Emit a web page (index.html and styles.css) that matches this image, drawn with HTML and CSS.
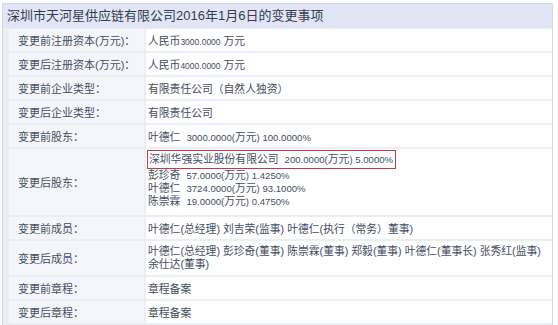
FILE: index.html
```html
<!DOCTYPE html>
<html lang="zh-CN">
<head>
<meta charset="utf-8">
<title>变更事项</title>
<link rel="stylesheet" href="styles.css">
</head>
<body>
<div class="box">
  <div class="title">深圳市天河星供应链有限公司2016年1月6日的变更事项</div>
  <div class="grid">
    <div class="lab">变更前注册资本(万元)：</div>
    <div class="val"><span>人民币<span class="sm">3000.0000</span> 万元</span></div>

    <div class="lab">变更后注册资本(万元)：</div>
    <div class="val"><span>人民币<span class="sm">4000.0000</span> 万元</span></div>

    <div class="lab">变更前企业类型：</div>
    <div class="val">有限责任公司（自然人独资）</div>

    <div class="lab">变更后企业类型：</div>
    <div class="val">有限责任公司</div>

    <div class="lab">变更前股东：</div>
    <div class="val"><span>叶德仁&nbsp; <span class="n">3000.0000(</span>万元<span class="n">) 100.0000%</span></span></div>

    <div class="lab">变更后股东：</div>
    <div class="val multi holders">
      <span class="mark">深圳华强实业股份有限公司&nbsp; <span class="n">200.0000(</span>万元<span class="n">) 5.0000%</span></span>
      <span class="line">彭珍奇&nbsp; <span class="n">57.0000(</span>万元<span class="n">) 1.4250%</span></span>
      <span class="line">叶德仁&nbsp; <span class="n">3724.0000(</span>万元<span class="n">) 93.1000%</span></span>
      <span class="line">陈崇霖&nbsp; <span class="n">19.0000(</span>万元<span class="n">) 0.4750%</span></span>
    </div>

    <div class="lab">变更前成员：</div>
    <div class="val">叶德仁(总经理) 刘吉荣(监事) 叶德仁(执行（常务）董事)</div>

    <div class="lab">变更后成员：</div>
    <div class="val multi"><span class="line">叶德仁(总经理) 彭珍奇(董事) 陈崇霖(董事) 郑毅(董事) 叶德仁(董事长) 张秀红(监事)</span><span class="line">余仕达(董事)</span></div>

    <div class="lab">变更前章程：</div>
    <div class="val">章程备案</div>

    <div class="lab">变更后章程：</div>
    <div class="val">章程备案</div>
  </div>
</div>
</body>
</html>
```

FILE: styles.css
```css
html, body {
  margin: 0;
  padding: 0;
  background: #ffffff;
}

body {
  font-family: "Liberation Sans", "Noto Sans CJK SC", sans-serif;
  color: #454d62;
}

.box {
  margin: 3px 0 0 2px;
  width: 549px;
  border: 1px solid #d3d7e1;
  background: #eceef5;
}

.title {
  height: 24px;
  line-height: 24px;
  padding-left: 4px;
  background: #e1e5f6;
  font-size: 13px;
  color: #353b4c;
  white-space: nowrap;
}

.grid {
  display: grid;
  grid-template-columns: 135px 1fr;
  column-gap: 2px;
  row-gap: 2px;
  padding: 1px 0 2px 6px;
}

.lab, .val {
  display: flex;
  align-items: center;
  min-height: 22px;
  white-space: nowrap;
}

.lab {
  background: #f5f6fb;
  padding-left: 9px;
  font-size: 11px;
}

.val {
  background: #ffffff;
  padding-left: 2px;
  font-size: 10.8px;
}

.sm {
  font-size: 8.5px;
}

.n {
  font-size: 9.6px;
}

.multi {
  flex-direction: column;
  align-items: flex-start;
  justify-content: center;
  line-height: 13px;
  padding-top: 4px;
  padding-bottom: 4px;
}

.holders {
  padding-top: 1px;
  padding-bottom: 7px;
}

.line {
  display: block;
}

.mark {
  display: block;
  border: 1px solid #c4393d;
  padding: 1px 2px 1px 1px;
  margin-left: -1px;
  line-height: 14px;
}
```
